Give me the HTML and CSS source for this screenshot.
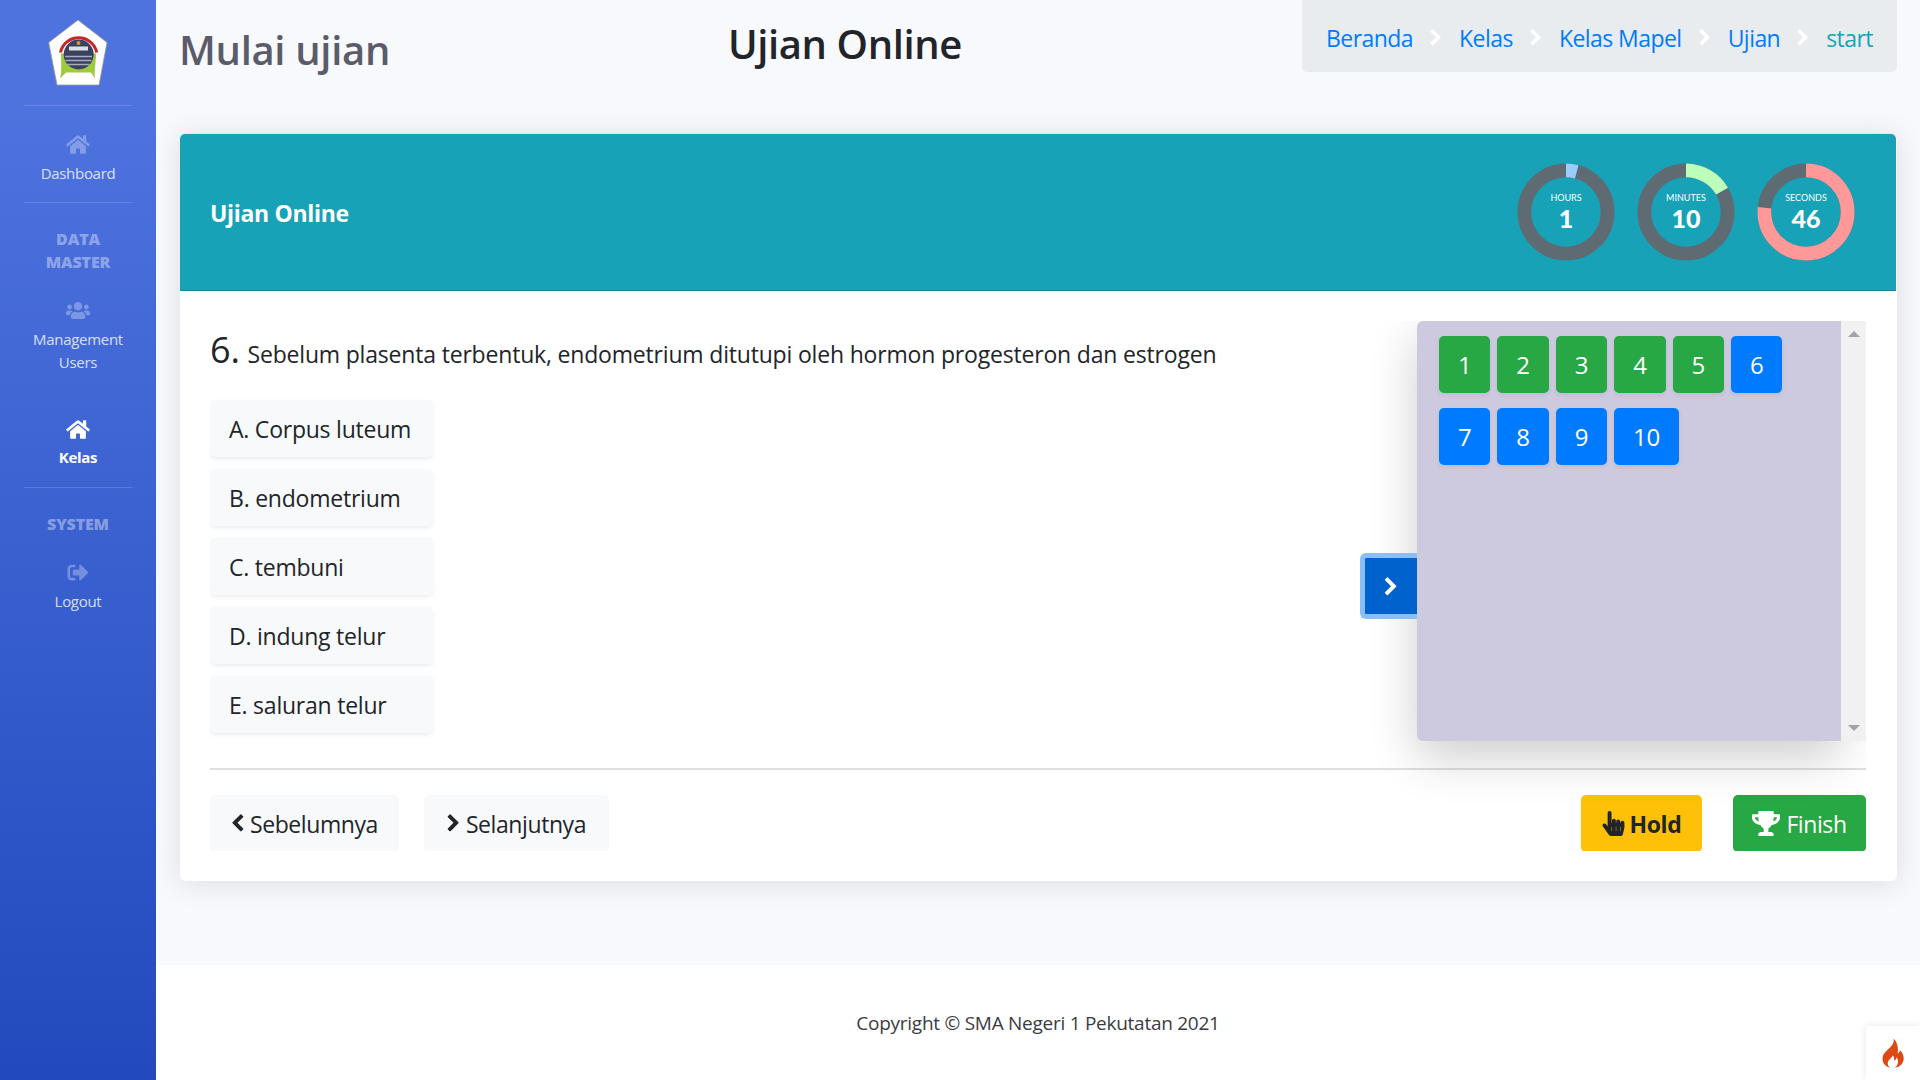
FILE: index.html
```html
<!DOCTYPE html>
<html lang="id">
<head>
<meta charset="utf-8">
<title>Ujian Online</title>
<link rel="stylesheet" href="styles.css">
</head>
<body>
<svg class="defs" aria-hidden="true">
  <symbol id="i-home" viewBox="0 0 576 512"><path d="M280.37 148.26L96 300.11V464a16 16 0 0 0 16 16l112.06-.29a16 16 0 0 0 15.92-16V368a16 16 0 0 1 16-16h64a16 16 0 0 1 16 16v95.64a16 16 0 0 0 16 16.05L464 480a16 16 0 0 0 16-16V300L295.67 148.26a12.19 12.19 0 0 0-15.3 0zM571.6 251.47L488 182.56V44.05a12 12 0 0 0-12-12h-56a12 12 0 0 0-12 12v72.61L318.47 43a48 48 0 0 0-61 0L4.34 251.47a12 12 0 0 0-1.6 16.9l25.5 31A12 12 0 0 0 45.15 301l235.22-193.74a12.19 12.19 0 0 1 15.3 0L530.9 301a12 12 0 0 0 16.9-1.6l25.5-31a12 12 0 0 0-1.7-16.93z"/></symbol>
  <symbol id="i-users" viewBox="0 0 640 512"><path d="M96 224c35.3 0 64-28.7 64-64s-28.7-64-64-64-64 28.7-64 64 28.7 64 64 64zm448 0c35.3 0 64-28.7 64-64s-28.7-64-64-64-64 28.7-64 64 28.7 64 64 64zm32 32h-64c-17.6 0-33.5 7.1-45.1 18.6 40.3 22.1 68.9 62 75.1 109.4h66c17.7 0 32-14.3 32-32v-32c0-35.3-28.7-64-64-64zm-256 0c61.9 0 112-50.1 112-112S381.9 32 320 32 208 82.1 208 144s50.1 112 112 112zm76.8 32h-8.3c-20.8 10-43.9 16-68.5 16s-47.6-6-68.5-16h-8.3C179.6 288 128 339.6 128 403.2V432c0 26.5 21.5 48 48 48h288c26.5 0 48-21.5 48-48v-28.8c0-63.6-51.6-115.2-115.2-115.2zm-223.7-13.4C161.5 263.1 145.6 256 128 256H64c-35.3 0-64 28.7-64 64v32c0 17.7 14.3 32 32 32h65.9c6.3-47.4 34.9-87.3 75.2-109.4z"/></symbol>
  <symbol id="i-out" viewBox="0 0 512 512"><path d="M497 273L329 441c-15 15-41 4.5-41-17v-96H152c-13.3 0-24-10.7-24-24v-96c0-13.3 10.7-24 24-24h136V88c0-21.4 25.9-32 41-17l168 168c9.3 9.4 9.3 24.6 0 34zM192 436v-40c0-6.6-5.4-12-12-12H96c-17.7 0-32-14.3-32-32V160c0-17.7 14.3-32 32-32h84c6.6 0 12-5.4 12-12V76c0-6.6-5.4-12-12-12H96c-53 0-96 43-96 96v192c0 53 43 96 96 96h84c6.6 0 12-5.4 12-12z"/></symbol>
  <symbol id="i-right" viewBox="0 0 1792 1792"><path d="M1363 877l-742 742q-19 19-45 19t-45-19l-166-166q-19-19-19-45t19-45l531-531-531-531q-19-19-19-45t19-45l166-166q19-19 45-19t45 19l742 742q19 19 19 45t-19 45z"/></symbol>
  <symbol id="i-left" viewBox="0 0 1792 1792"><path d="M1427 301l-531 531 531 531q19 19 19 45t-19 45l-166 166q-19 19-45 19t-45-19l-742-742q-19-19-19-45t19-45l742-742q19-19 45-19t45 19l166 166q19 19 19 45t-19 45z"/></symbol>
  <symbol id="i-trophy" viewBox="0 0 576 512"><path d="M552 64H448V24c0-13.3-10.7-24-24-24H152c-13.3 0-24 10.7-24 24v40H24C10.7 64 0 74.7 0 88v56c0 35.7 22.5 72.4 61.9 100.7 31.5 22.7 69.8 37.1 110 41.7C203.3 338.5 240 360 240 360v72h-48c-35.3 0-64 20.7-64 56v12c0 6.6 5.4 12 12 12h296c6.6 0 12-5.4 12-12v-12c0-35.3-28.7-56-64-56h-48v-72s36.7-21.5 68.1-73.6c40.3-4.6 78.6-19 110-41.7 39.3-28.3 61.9-65 61.9-100.7V88c0-13.3-10.7-24-24-24zM99.3 192.8C74.9 175.2 64 155.6 64 144v-16h64.2c1 32.6 5.8 61.2 12.8 86.2-15.1-5.2-29.2-12.4-41.7-21.4zM512 144c0 16.1-17.7 36.1-35.3 48.8-12.5 9-26.7 16.2-41.8 21.4 7-25 11.8-53.6 12.8-86.2H512v16z"/></symbol>
  <symbol id="i-hand" viewBox="0 0 448 512"><path d="M448 240v96c0 3.084-.356 6.159-1.063 9.162l-32 136C410.686 499.23 394.562 512 376 512H168a40.004 40.004 0 0 1-32.35-16.473l-127.997-176c-12.993-17.866-9.043-42.883 8.822-55.876 17.867-12.994 42.884-9.043 55.877 8.823L104 315.992V40c0-22.091 17.908-40 40-40s40 17.909 40 40v200h8v-40c0-22.091 17.908-40 40-40s40 17.909 40 40v40h8v-24c0-22.091 17.908-40 40-40s40 17.909 40 40v24h8c0-22.091 17.908-40 40-40s40 17.909 40 40zm-256 80h-8v96h8v-96zm88 0h-8v96h8v-96zm88 0h-8v96h8v-96z"/></symbol>
</svg>

<div class="app">
  <aside class="sidebar">
    <div class="brand">
      <svg class="logo" viewBox="0 0 60 66" role="img" aria-label="Logo sekolah">
        <polygon points="30,0.500 59,23 51,65.500 9,65.500 0.700,23" fill="#fff" stroke="#9a9a9a" stroke-width="0.800"/>
        <path d="M13 34C13 44 14 52 12 59L18 53C22 53 25 53 30 53C36 53 40 53 43 53L47 59C46 50 48 44 48 34Z" fill="#9ccb3b"/>
        <path d="M12.500 33A18.500 18.500 0 0 1 48.700 33" fill="none" stroke="#c8252a" stroke-width="3"/>
        <circle cx="30.700" cy="35" r="15" fill="#39415f"/>
        <path d="M17 37h27M17.500 41h26M19.500 45h22" stroke="#a9adbb" stroke-width="1.500"/>
        <rect x="21" y="27" width="19" height="4" fill="#dfe0e4"/>
        <circle cx="30.500" cy="23.500" r="2" fill="#d19a2b"/>
      </svg>
    </div>
    <div class="rule"></div>
    <a class="nav-item nav-dash">
      <svg class="nav-icon"><use href="#i-home"/></svg>
      <span>Dashboard</span>
    </a>
    <div class="rule"></div>
    <div class="nav-heading nav-heading-data">DATA MASTER</div>
    <a class="nav-item nav-users">
      <svg class="nav-icon"><use href="#i-users"/></svg>
      <span>Management Users</span>
    </a>
    <a class="nav-item nav-kelas active">
      <svg class="nav-icon"><use href="#i-home"/></svg>
      <span>Kelas</span>
    </a>
    <div class="rule"></div>
    <div class="nav-heading nav-heading-sys">SYSTEM</div>
    <a class="nav-item nav-out">
      <svg class="nav-icon"><use href="#i-out"/></svg>
      <span>Logout</span>
    </a>
  </aside>

  <div class="main">
    <header class="topbar">
      <h1 class="page-title">Mulai ujian</h1>
      <h2 class="exam-title">Ujian Online</h2>
      <nav class="crumbs">
        <a>Beranda</a><svg class="crumb-sep"><use href="#i-right"/></svg>
        <a>Kelas</a><svg class="crumb-sep"><use href="#i-right"/></svg>
        <a>Kelas Mapel</a><svg class="crumb-sep"><use href="#i-right"/></svg>
        <a>Ujian</a><svg class="crumb-sep"><use href="#i-right"/></svg>
        <span class="crumb-now">start</span>
      </nav>
    </header>

    <section class="card">
      <div class="card-head">
        <div class="card-name">Ujian Online</div>
        <div class="timers">
          <div class="timer">
            <svg class="ring" viewBox="0 0 100 100"><circle class="ring-bg" cx="50" cy="50" r="42.500"/><circle class="ring-val ring-h" cx="50" cy="50" r="42.500" pathLength="360" stroke-dasharray="15 345"/></svg>
            <div class="timer-txt"><small>HOURS</small><b>1</b></div>
          </div>
          <div class="timer">
            <svg class="ring" viewBox="0 0 100 100"><circle class="ring-bg" cx="50" cy="50" r="42.500"/><circle class="ring-val ring-m" cx="50" cy="50" r="42.500" pathLength="360" stroke-dasharray="60 300"/></svg>
            <div class="timer-txt"><small>MINUTES</small><b>10</b></div>
          </div>
          <div class="timer">
            <svg class="ring" viewBox="0 0 100 100"><circle class="ring-bg" cx="50" cy="50" r="42.500"/><circle class="ring-val ring-s" cx="50" cy="50" r="42.500" pathLength="360" stroke-dasharray="276 84"/></svg>
            <div class="timer-txt"><small>SECONDS</small><b>46</b></div>
          </div>
        </div>
      </div>

      <div class="card-body">
        <div class="card-inner">
          <div class="exam-row">
            <div class="question">
              <p class="q-text"><span class="q-no">6.</span> Sebelum plasenta terbentuk, endometrium ditutupi oleh hormon progesteron dan estrogen</p>
              <div class="options">
                <button class="opt">A. Corpus luteum</button>
                <button class="opt">B. endometrium</button>
                <button class="opt">C. tembuni</button>
                <button class="opt">D. indung telur</button>
                <button class="opt">E. saluran telur</button>
              </div>
            </div>
            <div class="drawer">
              <button class="drawer-toggle" aria-label="Tutup"><svg class="toggle-icon"><use href="#i-right"/></svg></button>
              <div class="palette">
                <button class="num done">1</button>
                <button class="num done">2</button>
                <button class="num done">3</button>
                <button class="num done">4</button>
                <button class="num done">5</button>
                <button class="num">6</button>
                <button class="num">7</button>
                <button class="num">8</button>
                <button class="num">9</button>
                <button class="num wide">10</button>
              </div>
              <div class="scrollbar"><i class="arrow-up"></i><i class="arrow-down"></i></div>
            </div>
          </div>
          <hr class="divider">
          <div class="actions">
            <button class="act act-light act-prev"><svg class="act-chev"><use href="#i-left"/></svg> Sebelumnya</button>
            <button class="act act-light act-next"><svg class="act-chev"><use href="#i-right"/></svg> Selanjutnya</button>
            <span class="spacer"></span>
            <button class="act act-hold"><svg class="act-hand"><use href="#i-hand"/></svg> Hold</button>
            <button class="act act-finish"><svg class="act-trophy"><use href="#i-trophy"/></svg> Finish</button>
          </div>
        </div>
      </div>
    </section>

    <footer class="footer">Copyright © SMA Negeri 1 Pekutatan 2021</footer>
  </div>
</div>

<div class="ci-badge">
  <svg class="flame" viewBox="0 0 24 30" role="img" aria-label="CodeIgniter"><path fill="#dd4814" d="M12.500 0.500C13.500 5 11 7.500 8 10.500C4.500 13.800 1.500 16.500 1.500 20.800C1.500 25.500 5 29 9.500 29.800C7.500 28.500 6.300 26.600 6.800 24.400C7.400 21.700 10.300 20.500 11.800 17.500C13.300 19.300 13.300 21 12.800 22.600C14.500 22.300 15.500 21 15.600 19.300C17.300 21.500 17.500 24 16.500 26.200C16 27.600 15 28.900 13.800 29.800C19 29 22.700 25.300 22.700 20.500C22.700 16.800 20.700 13.800 18.800 12C18.800 13.800 18 15 16.700 15.500C17.500 10.500 16.500 4 12.500 0.500Z"/></svg>
</div>
</body>
</html>
```
FILE: styles.css
```css
* { box-sizing: border-box; }
html, body { margin: 0; height: 100%; }
body {
  font-family: "Open Sans", "Noto Sans", sans-serif;
  color: #212529;
  background: #f8f9fc;
  overflow: hidden;
  letter-spacing: -0.016em;
}
.defs { display: none; }
button { font: inherit; letter-spacing: inherit; border: 0; cursor: pointer; white-space: nowrap; }
.app { display: flex; height: 1080px; }

/* sidebar */
.sidebar {
  width: 156px;
  flex: none;
  background: linear-gradient(180deg, #4e73df 10%, #224abe 100%);
  display: flex;
  flex-direction: column;
  align-items: center;
  color: rgba(255,255,255,.8);
  font-size: 15px;
  line-height: 23px;
  letter-spacing: -.02em;
  text-align: center;
}
.brand { height: 105px; padding-top: 19px; display: flex; justify-content: center; }
.logo { width: 60px; height: 67px; }
.rule { width: 108px; height: 1px; background: rgba(255,255,255,.15); flex: none; }
.nav-item { display: flex; flex-direction: column; align-items: center; width: 100%; padding: 0 16px; }
.nav-icon { width: 24px; height: 21px; fill: rgba(255,255,255,.3); margin-bottom: 6px; flex: none; }
.nav-dash { padding-top: 28px; height: 96px; }
.nav-dash .nav-icon { margin-bottom: 7px; }
.nav-users { margin-top: 26px; height: 97px; }
.nav-users .nav-icon { margin-bottom: 7px; }
.nav-kelas { margin-top: 22px; height: 68px; font-weight: 700; color: #fff; }
.nav-kelas .nav-icon { fill: #fff; }
.nav-out { margin-top: 26px; }
.nav-out .nav-icon { margin-bottom: 7px; }
.nav-heading { font-weight: 800; color: rgba(255,255,255,.4); font-size: 16px; line-height: 23px; width: 100px; letter-spacing: -.01em; }
.nav-heading-data { margin-top: 25px; }
.nav-heading-sys { margin-top: 25px; }

/* main */
.main { flex: 1; min-width: 0; display: flex; flex-direction: column; }
.topbar { display: flex; align-items: flex-start; height: 134px; padding: 0 23px 0 24px; }
.page-title { margin: 26px 0 0 -1px; font-size: 40px; line-height: 48px; font-weight: 600; color: #5a5c69; width: 549px; letter-spacing: -.008em; }
.exam-title { margin: 20px 0 0; font-size: 40px; line-height: 48px; font-weight: 600; color: #212529; letter-spacing: -.01em; }
.crumbs {
  margin-left: auto;
  height: 72px;
  width: 595px;
  background: #e9ecef;
  border-radius: 0 0 5px 5px;
  display: flex;
  align-items: center;
  padding: 3px 24px 0;
  justify-content: space-between;
  font-size: 23px;
  letter-spacing: -.024em;
  color: #007bff;
}
.crumb-sep { width: 18px; height: 18px; fill: #fff; }
.crumb-now { color: #17a2b8; }

/* card */
.card {
  margin: 0 23px 0 24px;
  height: 747px;
  flex: none;
  background: #fff;
  border-radius: 6px;
  box-shadow: 0 -1px 0 #e3e6f0, 0 2px 28px rgba(58,59,69,.15);
}
.card-head {
  height: 157px;
  margin-right: 1px;
  background: #17a2b8;
  border-bottom: 1px solid #148a9d;
  border-radius: 5px 5px 0 0;
  display: flex;
  align-items: center;
  justify-content: space-between;
  padding: 2px 41px 0 30px;
}
.card-name { color: #fff; font-weight: 700; font-size: 23px; letter-spacing: -.014em; }
.timers { display: flex; gap: 22px; margin-top: -3px; }
.timer { width: 98px; height: 98px; position: relative; }
.ring { width: 98px; height: 98px; transform: rotate(-90deg); display: block; }
.ring-bg, .ring-val { fill: none; stroke-width: 14; }
.ring-bg { stroke: #5f6b72; }
.ring-h { stroke: #99ccff; }
.ring-m { stroke: #bbffbb; }
.ring-s { stroke: #ff9999; }
.timer-txt {
  position: absolute;
  inset: 0;
  display: flex;
  flex-direction: column;
  align-items: center;
  justify-content: center;
  color: #fff;
  font-family: "Lato", sans-serif;
  letter-spacing: 0;
}
.timer-txt small { font-size: 9px; line-height: 10px; margin-top: 2px; }
.timer-txt b { font-size: 25px; line-height: 30px; font-weight: 900; }

.card-body { padding: 30px 31px 0 30px; }
.card-inner { height: 530px; overflow: hidden; }
.exam-row { display: flex; height: 420px; }
.question { flex: 1; min-width: 0; }
.q-text { margin: 0; padding-top: 11px; font-size: 23px; line-height: 36px; height: 79px; letter-spacing: -.008em; }
.q-no { font-size: 36px; line-height: 36px; margin-right: 2px; }
.options { display: flex; flex-direction: column; gap: 12px; align-items: flex-start; }
.opt {
  width: 223px;
  height: 57px;
  background: #f8f9fa;
  border-radius: 5px;
  font-size: 23px;
  color: #212529;
  text-align: left;
  padding: 0 19px;
  box-shadow: 0 2px 4px rgba(0,0,0,.075);
  letter-spacing: -.01em;
}
.drawer { width: 449.500px; flex: none; position: relative; display: flex; }
.palette {
  flex: 1;
  background: #cdc9df;
  border-radius: 6px 0 0 6px;
  padding: 15px 22.500px;
  display: flex;
  flex-wrap: wrap;
  align-content: flex-start;
  gap: 15px 7px;
  box-shadow: 0 16px 48px rgba(0,0,0,.2);
}
.num {
  width: 51.400px;
  height: 57px;
  background: #007bff;
  color: #fff;
  font-size: 24px;
  border-radius: 5px;
  box-shadow: 0 2px 4px rgba(0,0,0,.075);
  padding: 0;
}
.num.done { background: #28a745; }
.num.wide { width: 64.700px; }
.scrollbar {
  width: 25px;
  flex: none;
  background: #f1f1f1;
  display: flex;
  flex-direction: column;
  justify-content: space-between;
  align-items: center;
  padding: 10px 0 10px;
}
.arrow-up { border: 6px solid transparent; border-top: 0; border-bottom: 6px solid #a3a3a3; }
.arrow-down { border: 6px solid transparent; border-bottom: 0; border-top: 6px solid #a3a3a3; }
.drawer-toggle {
  position: absolute;
  left: -57px;
  top: 232px;
  width: 57px;
  height: 66px;
  background: #0062cc;
  border: 5px solid #8bbdf6;
  border-right: 0;
  border-radius: 6px 0 0 6px;
  padding: 2px 0 0;
  z-index: 2;
  display: flex;
  align-items: center;
  justify-content: center;
}
.toggle-icon { width: 20px; height: 20px; fill: #fff; }

.divider { border: 0; border-top: 2px solid #dfdfe1; margin: 27px 0 25px; }
.actions { display: flex; gap: 26px; align-items: flex-start; }
.spacer { flex: 1; }
.act {
  height: 57px;
  font-size: 23px;
  border-radius: 5px;
  padding: 0;
  display: flex;
  align-items: center;
  justify-content: center;
  gap: 6px;
  letter-spacing: -.018em;
}
.act-light { background: #f8f9fa; color: #212529; }
.act-prev { width: 189px; }
.act-next { width: 185px; margin-left: -1px; }
.act-hold { width: 121px; background: #ffc107; color: #212529; font-weight: 700; box-shadow: 0 2px 4px rgba(0,0,0,.075); gap: 5px; }
.act-finish { width: 133px; background: #28a745; color: #fff; box-shadow: 0 2px 4px rgba(0,0,0,.075); margin-left: 5px; }
.act-chev { width: 19px; height: 19px; fill: #212529; margin: 0 -3px; }
.act-hand { width: 23px; height: 25px; fill: #212529; }
.act-trophy { width: 28px; height: 25px; fill: #fff; }

/* footer */
.footer {
  margin-top: auto;
  height: 115px;
  background: #fff;
  display: flex;
  justify-content: center;
  align-items: center;
  font-size: 19px;
  letter-spacing: -.014em;
  color: #3a3b45;
}

.ci-badge {
  position: fixed;
  right: 0;
  bottom: 0;
  width: 54px;
  height: 54px;
  background: #fff;
  box-shadow: 0 0 8px rgba(0,0,0,.1);
  display: flex;
  align-items: center;
  justify-content: center;
}
.flame { width: 24px; height: 30px; }
```
